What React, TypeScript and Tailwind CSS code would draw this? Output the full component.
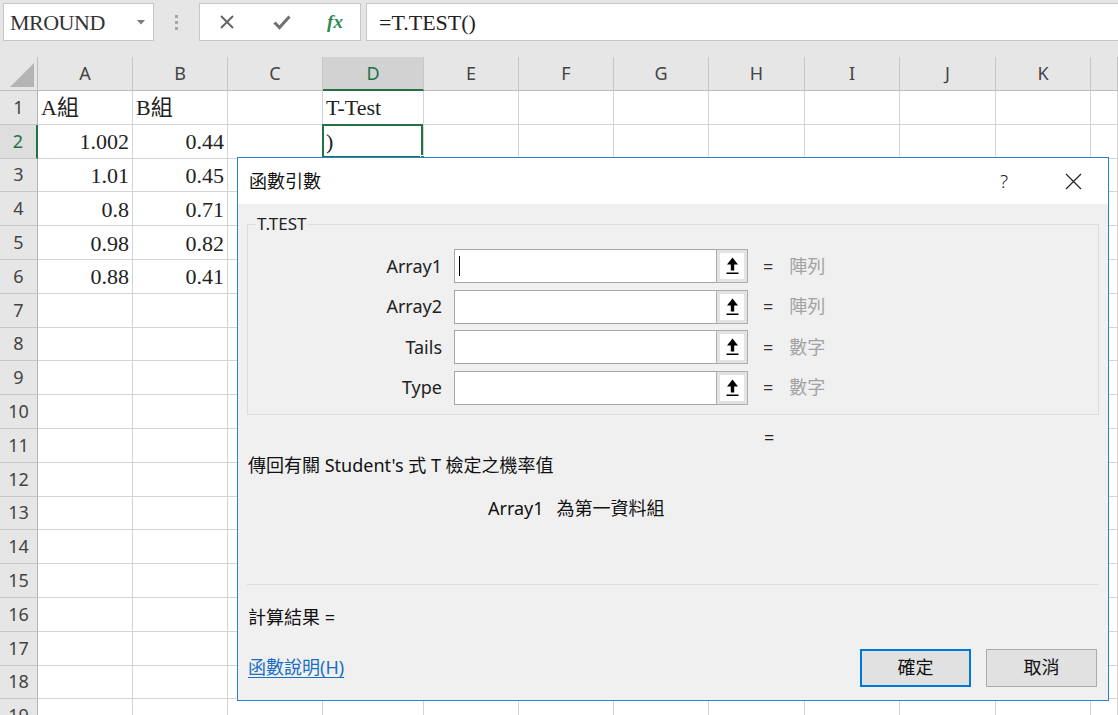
import React from 'react';

const GRID =
  'grid grid-cols-[38px_95px_95px_95px_101px_95px_95px_95px_96px_95px_96px_95px_1fr]';
const SERIF = "font-['Liberation_Serif','Noto_Sans_CJK_TC',serif]";
const UI = "font-['Noto_Sans','Noto_Sans_CJK_TC',sans-serif]";

const COLS = ['A', 'B', 'C', 'D', 'E', 'F', 'G', 'H', 'I', 'J', 'K', ''];

// cell values keyed by row then column letter
const CELLS: Record<number, Record<string, { v: string; right?: boolean }>> = {
  1: { A: { v: 'A組' }, B: { v: 'B組' }, D: { v: 'T-Test' } },
  2: { A: { v: '1.002', right: true }, B: { v: '0.44', right: true }, D: { v: ')' } },
  3: { A: { v: '1.01', right: true }, B: { v: '0.45', right: true } },
  4: { A: { v: '0.8', right: true }, B: { v: '0.71', right: true } },
  5: { A: { v: '0.98', right: true }, B: { v: '0.82', right: true } },
  6: { A: { v: '0.88', right: true }, B: { v: '0.41', right: true } },
};

const ARGS = [
  { name: 'Array1', hint: '陣列', cursor: true },
  { name: 'Array2', hint: '陣列' },
  { name: 'Tails', hint: '數字' },
  { name: 'Type', hint: '數字' },
];

function RefButton() {
  return (
    <div className="w-[32px] h-[34px] border border-[#adadad] bg-[#e3e3e3] p-[3px]">
      <div className="w-full h-full bg-white flex items-center justify-center">
        <svg width="13" height="20" viewBox="0 0 13 20">
          <path d="M6.5 1.5 L12 8.5 H8.2 V14.5 H4.8 V8.5 H1 Z" fill="#000" />
          <rect x="0.5" y="16.5" width="12" height="1.5" fill="#000" />
        </svg>
      </div>
    </div>
  );
}

function FormulaBar() {
  return (
    <div className="h-[57px] bg-[#e6e6e6] flex items-start pt-[3px] pl-[3px]">
      <div className="w-[151px] h-[38px] bg-white border border-[#c6c6c6] flex items-center pl-[6px] pr-[8px]">
        <span className={`${SERIF} text-[22px] text-[#333] tracking-[-0.5px]`}>MROUND</span>
        <svg className="ml-auto" width="8" height="5" viewBox="0 0 8 5">
          <path d="M0 0 H8 L4 4.5 Z" fill="#7a7a7a" />
        </svg>
      </div>
      <div className="w-[45px] h-[38px] flex flex-col items-center justify-center gap-[3px]">
        <span className="w-[3px] h-[3px] bg-[#a6a6a6]" />
        <span className="w-[3px] h-[3px] bg-[#a6a6a6]" />
        <span className="w-[3px] h-[3px] bg-[#a6a6a6]" />
      </div>
      <div className="w-[162px] h-[38px] bg-white border border-[#c6c6c6] flex items-center">
        <div className="w-[54px] flex justify-center">
          <svg width="16" height="16" viewBox="0 0 16 16">
            <path d="M2 2 L14 14 M14 2 L2 14" stroke="#666" strokeWidth="2" />
          </svg>
        </div>
        <div className="w-[56px] flex justify-center">
          <svg width="18" height="16" viewBox="0 0 18 16">
            <path d="M1.5 8.5 L6.5 13.5 L16.5 2.5" stroke="#707070" strokeWidth="3" fill="none" />
          </svg>
        </div>
        <div className="w-[50px] flex justify-center">
          <span className={`${SERIF} italic font-bold text-[19px] text-[#2e8b57]`}>fx</span>
        </div>
      </div>
      <div className="flex-1 ml-[5px] h-[38px] bg-white border border-r-0 border-[#c6c6c6] flex items-center pl-[12px]">
        <span className={`${SERIF} text-[22px] text-[#222]`}>=T.TEST()</span>
      </div>
    </div>
  );
}

function HeaderRow() {
  return (
    <div className={`${GRID} h-[34px] bg-[#e6e6e6]`}>
      <div className="border-r border-b border-[#bdbdbd] flex items-end justify-end pr-[3px] pb-[3px]">
        <svg width="24" height="24" viewBox="0 0 24 24">
          <path d="M24 0 V24 H0 Z" fill="#b4b4b4" />
        </svg>
      </div>
      {COLS.map((c, i) =>
        c === 'D' ? (
          <div
            key={i}
            className={`${UI} bg-[#d2d2d2] border-r border-[#c6c6c6] border-b-2 border-b-[#217346] flex items-center justify-center text-[18px] text-[#217346]`}
          >
            {c}
          </div>
        ) : (
          <div
            key={i}
            className={`${UI} border-r border-b border-[#c6c6c6] border-b-[#bdbdbd] flex items-center justify-center text-[18px] text-[#444]`}
          >
            {c}
          </div>
        )
      )}
    </div>
  );
}

function SheetRow({ n }: { n: number }) {
  const data = CELLS[n] || {};
  const active = n === 2;
  return (
    <div className={`${GRID} h-[33.8px]`}>
      {active ? (
        <div className={`${UI} bg-[#dedede] border-b border-[#c6c6c6] border-r-2 border-r-[#217346] flex items-center justify-center text-[18px] text-[#217346]`}>
          {n}
        </div>
      ) : (
        <div className={`${UI} bg-[#e6e6e6] border-b border-[#c6c6c6] border-r border-r-[#b4b4b4] flex items-center justify-center text-[18px] text-[#444]`}>
          {n}
        </div>
      )}
      {COLS.map((c, i) => {
        const cell = data[c];
        const selected = active && c === 'D';
        return (
          <div
            key={i}
            className={`relative bg-white border-r border-b border-[#d4d4d4] flex items-center px-[3px] pt-[2px] ${
              cell?.right ? 'justify-end' : 'justify-start'
            }`}
          >
            {cell && <span className={`${SERIF} text-[22px] text-[#222] leading-none`}>{cell.v}</span>}
            {selected && (
              <>
                <div className="absolute -left-[1px] -top-[1px] w-[calc(100%+1px)] h-[calc(100%+1px)] border-2 border-[#217346]" />
                <div className="absolute -right-[4px] -bottom-[4px] w-[7px] h-[7px] bg-[#217346] border border-white" />
              </>
            )}
          </div>
        );
      })}
    </div>
  );
}

function Dialog() {
  return (
    <div className={`${UI} absolute left-[237px] top-[157px] w-[872px] h-[544px] border border-[#2a80d5] bg-[#f0f0f0] flex flex-col text-[#111]`}>
      <div className="h-[46px] bg-white flex items-center pl-[11px] pr-[12px]">
        <span className="text-[18px]">函數引數</span>
        <div className="ml-auto flex items-center gap-[23px]">
          <span className="w-[46px] text-center text-[19px] font-light text-[#222]">?</span>
          <div className="w-[46px] flex justify-center">
            <svg width="17" height="17" viewBox="0 0 17 17">
              <path d="M1 1 L16 16 M16 1 L1 16" stroke="#222" strokeWidth="1.2" />
            </svg>
          </div>
        </div>
      </div>

      <div className="flex-1 px-[9px] pt-[10px] flex flex-col">
        <fieldset className="border border-[#dcdcdc] pb-[9px] pt-[15px]">
          <legend className="ml-[8px] px-[1px] text-[17px] leading-[20px] text-[#222]">T.TEST</legend>
          <div className="flex flex-col gap-[6.5px]">
            {ARGS.map((a) => (
              <div key={a.name} className="flex items-center h-[34px]">
                <span className="w-[194px] text-right text-[18px] text-[#222]">{a.name}</span>
                <div className="ml-[12px] w-[262px] h-[34px] border border-r-0 border-[#a6a6a6] bg-white flex items-center pl-[4px]">
                  {a.cursor && <span className="w-[1px] h-[20px] bg-black" />}
                </div>
                <RefButton />
                <span className="ml-[15px] text-[18px] text-[#333]">=</span>
                <span className="ml-[16px] text-[18px] text-[#a3a3a3]">{a.hint}</span>
              </div>
            ))}
          </div>
        </fieldset>

        <div className="mt-[10px] h-[24px] leading-[24px] pl-[517px] text-[18px] text-[#222]">=</div>
        <div className="mt-[4px] h-[24px] leading-[24px] pl-[1px] text-[18px]">
          傳回有關 Student's 式 T 檢定之機率值
        </div>
        <div className="mt-[19px] h-[24px] leading-[24px] pl-[241px] text-[18px] flex">
          <span>Array1</span>
          <span className="ml-[13px]">為第一資料組</span>
        </div>

        <div className="mt-[64px] border-t border-[#dcdcdc]" />

        <div className="mt-[20px] h-[24px] leading-[24px] pl-[1px] text-[18px]">計算結果 =</div>

        <div className="mt-[20px] h-[38px] flex items-center">
          <span className="pl-[1px] text-[18px] text-[#1a6fc4] underline underline-offset-[3px]">函數說明(H)</span>
          <button className="ml-auto w-[111px] h-[38px] border-2 border-[#0078d7] bg-[#e1e1e1] text-[18px]">
            確定
          </button>
          <button className="ml-[15px] mr-[2px] w-[111px] h-[38px] border border-[#adadad] bg-[#e1e1e1] text-[18px]">
            取消
          </button>
        </div>
      </div>
    </div>
  );
}

export default function App() {
  const rows = Array.from({ length: 19 }, (_, i) => i + 1);
  return (
    <div className="relative w-[1118px] h-[715px] overflow-hidden bg-white">
      <FormulaBar />
      <HeaderRow />
      {rows.map((n) => (
        <SheetRow key={n} n={n} />
      ))}
      <Dialog />
    </div>
  );
}
